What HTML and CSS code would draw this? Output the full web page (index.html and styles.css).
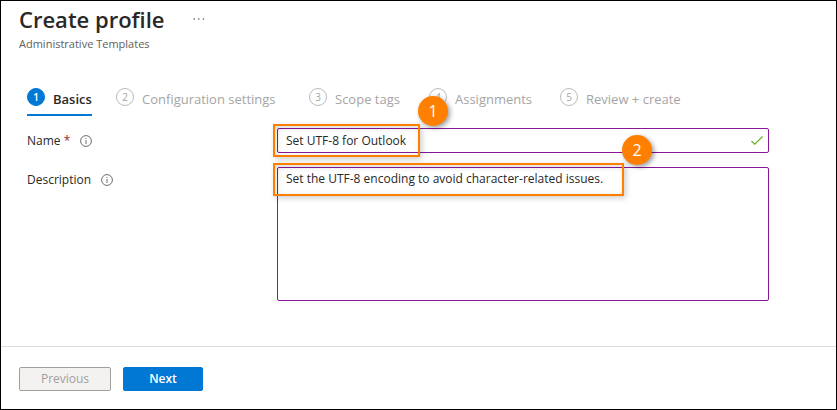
FILE: index.html
```html
<!DOCTYPE html>
<html lang="en">
<head>
<meta charset="utf-8">
<title>Create profile</title>
<link rel="stylesheet" href="styles.css">
</head>
<body>
<header class="header">
  <div class="title-row">
    <h1 class="title">Create profile</h1>
    <button class="more" type="button" aria-label="More">
      <svg width="12" height="4" viewBox="0 0 12 4" fill="#555"><circle cx="1.2" cy="2" r=".8"/><circle cx="5.8" cy="2" r=".8"/><circle cx="10.4" cy="2" r=".8"/></svg>
    </button>
  </div>
  <p class="subtitle">Administrative Templates</p>
</header>
<nav class="tabs">
  <a class="tab active" href="#basics"><span class="step">1</span><span>Basics</span></a>
  <a class="tab" href="#settings"><span class="step">2</span><span>Configuration settings</span></a>
  <a class="tab" href="#tags"><span class="step">3</span><span>Scope tags</span></a>
  <a class="tab" href="#assignments"><span class="step">4</span><span>Assignments</span></a>
  <a class="tab" href="#review"><span class="step">5</span><span>Review + create</span></a>
</nav>
<main class="form">
  <div class="label">
    <label for="name">Name <span class="required">*</span></label>
    <svg class="info" viewBox="0 0 12 12"><circle cx="6" cy="6" r="5.4"/><path d="M6 5v4M6 3v1"/></svg>
  </div>
  <div class="field">
    <input class="control" id="name" type="text" value="Set UTF-8 for Outlook">
    <svg class="check" viewBox="0 0 12 9"><path d="M.5 5l3.2 3.2L11.6.5"/></svg>
    <div class="callout callout-name"><span class="badge">1</span></div>
  </div>
  <div class="label">
    <label for="description">Description</label>
    <svg class="info" viewBox="0 0 12 12"><circle cx="6" cy="6" r="5.4"/><path d="M6 5v4M6 3v1"/></svg>
  </div>
  <div class="field">
    <textarea class="control" id="description">Set the UTF-8 encoding to avoid character-related issues.</textarea>
    <div class="callout callout-description"><span class="badge">2</span></div>
  </div>
</main>
<footer class="footer">
  <button class="button" type="button" disabled>Previous</button>
  <button class="button primary" type="button">Next</button>
</footer>
</body>
</html>
```
FILE: styles.css
```css
* { box-sizing: border-box; }
body {
  margin: 0;
  min-height: 100vh;
  border: 1px solid #000;
  background: #fff;
  color: #292827;
  font: 12px/16px "Open Sans", "Noto Sans", sans-serif;
}
.header { padding: 4px 18px 0; }
.title-row { display: flex; align-items: center; gap: 28px; }
.title { margin: 0; font-size: 22px; line-height: 28px; font-weight: 600; }
.more { display: flex; padding: 0; border: 0; background: none; }
.subtitle { margin: 3px 0 0; font-size: 11px; color: #605e5c; }
.tabs {
  display: grid;
  grid-template-columns: 65px 169px 96px 107px auto;
  justify-content: start;
  gap: 24px;
  margin-top: 35px;
  padding: 0 26px;
}
.tab {
  display: flex;
  align-items: center;
  gap: 8px;
  height: 29px;
  padding-bottom: 3px;
  border-bottom: 2px solid transparent;
  color: #a6a5a4;
  font-size: 13px;
  text-decoration: none;
  white-space: nowrap;
}
.step {
  display: flex;
  align-items: center;
  justify-content: center;
  width: 18px;
  height: 18px;
  margin-bottom: 4px;
  border: 1px solid #bbb;
  border-radius: 50%;
  font-size: 10px;
}
.active { border-color: #0078d4; color: #292827; font-weight: 600; }
.active .step { border-color: #0078d4; background: #0078d4; color: #fff; }
.form {
  display: grid;
  grid-template-columns: 250px minmax(0, 492px);
  row-gap: 14px;
  margin-top: 12px;
  padding: 0 26px;
}
.label { display: flex; align-items: center; gap: 10px; height: 25px; }
.required { color: #a4262c; }
.info { width: 12px; height: 12px; fill: none; stroke: #706e6c; stroke-width: 1; }
.field { position: relative; }
.control {
  display: block;
  width: 100%;
  height: 25px;
  margin: 0;
  padding: 3px 8px;
  border: 1px solid #881798;
  border-radius: 2px;
  background: #fff;
  color: #292827;
  font: inherit;
  outline: 0;
  resize: none;
}
textarea.control { height: 134px; }
.check {
  position: absolute;
  top: 8px;
  right: 6px;
  width: 12px;
  height: 9px;
  fill: none;
  stroke: #6bb02a;
  stroke-width: 1.2;
}
.callout {
  position: absolute;
  top: -4px;
  left: -4px;
  height: 33px;
  border: 2px solid #ff8000;
  box-shadow: 2px 2px 6px rgba(0, 0, 0, .2), inset 2px 2px 6px rgba(0, 0, 0, .15);
  pointer-events: none;
}
.callout-name { width: 147px; }
.callout-description { width: 351px; }
.badge {
  position: absolute;
  z-index: 1;
  top: -30px;
  right: -30px;
  display: flex;
  align-items: center;
  justify-content: center;
  width: 30px;
  height: 30px;
  border-radius: 50%;
  background: #ff8000;
  box-shadow: 2px 2px 5px rgba(0, 0, 0, .4);
  color: #fff;
  font-size: 16px;
}
.footer {
  display: flex;
  gap: 12px;
  margin-top: 45px;
  padding: 20px 18px 18px;
  border-top: 1px solid #dcdcdc;
}
.button {
  width: 92px;
  height: 24px;
  padding: 0;
  border: 1px solid #a19f9d;
  border-radius: 2px;
  background: #f3f2f1;
  color: #a19f9d;
  font: inherit;
}
.primary { width: 80px; border-color: #0078d4; background: #0078d4; color: #fff; font-weight: 600; }
```
